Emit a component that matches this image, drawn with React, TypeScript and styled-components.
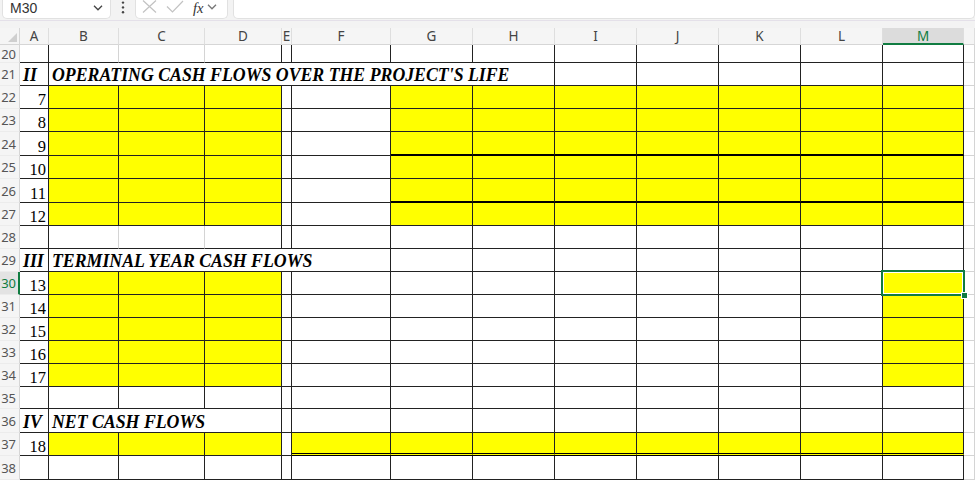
import React from 'react'
import styled, { createGlobalStyle } from 'styled-components'

type Border = 'none' | 'grid' | 'thin' | 'thick' | 'double'
type Kind = 'num' | 'label'

interface CellSpec {
  span?: number
  fill?: boolean
  text?: string
  kind?: Kind
  r?: Border
  b?: Border
  selected?: boolean
}

interface RowSpec {
  n: number
  h: number
  cells: CellSpec[]
}

const GREEN = '#107c41'
const LETTERS = ['A', 'B', 'C', 'D', 'E', 'F', 'G', 'H', 'I', 'J', 'K', 'L', 'M']
const WIDTHS = [29, 70, 86, 77, 10, 99, 82, 82, 82, 82, 82, 82, 81]
const ACTIVE_COL = 'M'
const ACTIVE_ROW = 30

const line = (b: Border = 'thin') => {
  switch (b) {
    case 'none':
      return 'none'
    case 'grid':
      return '1px solid #d4d4d4'
    case 'thick':
      return '2px solid #000'
    case 'double':
      return '3px double #000'
    default:
      return '1px solid #222'
  }
}

const blank = (count: number, spec: CellSpec = {}): CellSpec[] =>
  Array.from({ length: count }, () => ({ ...spec }))

const operatingRow = (n: number, h: number, num: string, thick = false): RowSpec => ({
  n,
  h,
  cells: [
    { text: num, kind: 'num' },
    ...blank(3, { fill: true }),
    {},
    {},
    ...blank(7, { fill: true, b: thick ? 'thick' : 'thin' }),
  ],
})

const terminalRow = (n: number, num: string, selected = false): RowSpec => ({
  n,
  h: 23,
  cells: [
    { text: num, kind: 'num' },
    ...blank(3, { fill: true }),
    {},
    ...blank(7),
    { fill: true, selected },
  ],
})

const ROWS: RowSpec[] = [
  { n: 20, h: 18, cells: [{}, { r: 'grid' }, { r: 'grid' }, ...blank(10)] },
  {
    n: 21,
    h: 23,
    cells: [
      { text: 'II', kind: 'label' },
      { span: 7, text: "OPERATING CASH FLOWS OVER THE PROJECT'S LIFE", kind: 'label' },
      ...blank(5),
    ],
  },
  operatingRow(22, 23, '7'),
  operatingRow(23, 23, '8'),
  operatingRow(24, 24, '9', true),
  operatingRow(25, 23, '10'),
  operatingRow(26, 24, '11', true),
  operatingRow(27, 23, '12'),
  { n: 28, h: 23, cells: [{}, { r: 'grid' }, { r: 'grid' }, ...blank(10)] },
  {
    n: 29,
    h: 23,
    cells: [
      { text: 'III', kind: 'label' },
      { span: 5, text: 'TERMINAL YEAR CASH FLOWS', kind: 'label' },
      ...blank(7),
    ],
  },
  terminalRow(30, '13', true),
  terminalRow(31, '14'),
  terminalRow(32, '15'),
  terminalRow(33, '16'),
  terminalRow(34, '17'),
  { n: 35, h: 22, cells: blank(13) },
  {
    n: 36,
    h: 24,
    cells: [
      { text: 'IV', kind: 'label' },
      { span: 3, text: 'NET CASH FLOWS', kind: 'label' },
      {},
      ...blank(8),
    ],
  },
  {
    n: 37,
    h: 23,
    cells: [
      { text: '18', kind: 'num' },
      ...blank(3, { fill: true }),
      {},
      ...blank(8, { fill: true, b: 'double' }),
    ],
  },
  { n: 38, h: 24, cells: blank(13) },
]

const GlobalStyle = createGlobalStyle`
  html, body {
    margin: 0;
    padding: 0;
    background: #fff;
    overflow: hidden;
  }
  #root {
    width: 975px;
    height: 480px;
    overflow: hidden;
  }
`

const Window = styled.div`
  width: 975px;
  height: 480px;
  display: flex;
  flex-direction: column;
  background: #f3f3f3;
  overflow: hidden;
`

const FormulaBar = styled.div`
  flex: none;
  display: flex;
  align-items: flex-start;
  height: 20px;
  border-bottom: 1px solid #e4e0e9;
  margin-bottom: 7px;
`

const Field = styled.div<{ $w?: number; $gap?: number }>`
  box-sizing: border-box;
  height: 19px;
  background: #fff;
  border: 1px solid #e1e1e1;
  border-top: none;
  border-radius: 0 0 5px 5px;
  display: flex;
  align-items: flex-start;
  width: ${p => (p.$w ? `${p.$w}px` : 'auto')};
  flex: ${p => (p.$w ? 'none' : '1')};
  margin-left: ${p => p.$gap ?? 0}px;
`

const NameText = styled.span`
  padding-left: 7px;
  font-family: 'Liberation Sans', Arial, sans-serif;
  font-size: 14px;
  line-height: 16px;
  color: #333;
`

const Menu = styled.div`
  width: 24px;
  height: 14px;
  display: flex;
  justify-content: center;
  padding-top: 1px;
`

const Fx = styled.span`
  margin-left: 9px;
  font-family: 'Liberation Serif', 'Times New Roman', serif;
  font-style: italic;
  font-size: 14.5px;
  line-height: 16px;
  color: #333;
`

const Sheet = styled.div<{ $rows: string }>`
  display: grid;
  grid-template-columns: 20px ${WIDTHS.map(w => `${w}px`).join(' ')} 1fr;
  grid-template-rows: 17px ${p => p.$rows};
  background: #fff;
  flex: 1;
`

const Corner = styled.div`
  box-sizing: border-box;
  background: #f5f5f5;
  border-right: 1px solid #d6d6d6;
  border-bottom: 1px solid #d6d6d6;
  display: flex;
  align-items: flex-end;
  justify-content: flex-end;
  padding: 0 2px 2px 0;
`

const ColHead = styled.div<{ $active?: boolean }>`
  box-sizing: border-box;
  display: flex;
  align-items: center;
  justify-content: center;
  font-family: 'Noto Sans', 'Open Sans', sans-serif;
  font-size: 13.5px;
  color: ${p => (p.$active ? GREEN : '#444')};
  background: ${p => (p.$active ? '#dcdcdc' : '#f5f5f5')};
  border-right: 1px solid #dedede;
  border-bottom: ${p => (p.$active ? `2px solid ${GREEN}` : '1px solid #d6d6d6')};
  overflow: hidden;
`

const RowHead = styled.div<{ $active?: boolean }>`
  box-sizing: border-box;
  display: flex;
  align-items: center;
  justify-content: flex-end;
  padding-right: ${p => (p.$active ? 2 : 3)}px;
  font-family: 'Noto Sans', 'Open Sans', sans-serif;
  font-size: 13px;
  color: ${p => (p.$active ? GREEN : '#555')};
  background: ${p => (p.$active ? '#e3e3e3' : '#f5f5f5')};
  border-right: ${p => (p.$active ? `2px solid ${GREEN}` : '1px solid #d6d6d6')};
  border-bottom: 1px solid #ececec;
  overflow: hidden;
  white-space: nowrap;
`

const Cell = styled.div<{ $fill?: boolean; $r?: Border; $b?: Border; $kind?: Kind; $span: number; $selected?: boolean }>`
  box-sizing: border-box;
  grid-column: span ${p => p.$span};
  position: ${p => (p.$selected ? 'relative' : 'static')};
  display: flex;
  align-items: flex-end;
  justify-content: ${p => (p.$kind === 'num' ? 'flex-end' : 'flex-start')};
  padding: ${p => (p.$kind === 'num' ? '0 2px 0 0' : '0 0 0 3px')};
  background: ${p => (p.$fill ? '#ffff00' : '#fff')};
  border-right: ${p => line(p.$r)};
  border-bottom: ${p => line(p.$b)};
  font-family: 'Liberation Serif', 'Times New Roman', serif;
  font-size: ${p => (p.$kind === 'num' ? '16.5px' : '17.8px')};
  font-weight: ${p => (p.$kind === 'label' ? 700 : 400)};
  font-style: ${p => (p.$kind === 'label' ? 'italic' : 'normal')};
  line-height: 1;
  color: #000;
  white-space: nowrap;
`

const Selection = styled.span`
  position: absolute;
  left: -2px;
  top: -2px;
  right: -2px;
  bottom: -2px;
  border: 2px solid ${GREEN};
  box-shadow: inset 0 0 0 1px #fff;
  z-index: 2;
  pointer-events: none;

  &::after {
    content: '';
    position: absolute;
    right: -5px;
    bottom: -5px;
    width: 5px;
    height: 5px;
    background: ${GREEN};
    border: 1px solid #fff;
  }
`

const Chevron: React.FC<{ color?: string; margin?: number; top?: number }> = ({ color = '#444', margin = 0, top = 5 }) => (
  <svg width="10" height="6" viewBox="0 0 10 6" style={{ marginLeft: margin, marginTop: top }}>
    <path d="M1 0.8 L5 4.8 L9 0.8" fill="none" stroke={color} strokeWidth="1.3" />
  </svg>
)

const App: React.FC = () => {
  const rowTemplate = ROWS.map(r => `${r.h}px`).join(' ')

  return (
    <>
      <GlobalStyle />
      <Window>
        <FormulaBar>
          <Field $w={109} $gap={2}>
            <NameText>M30</NameText>
            <span style={{ flex: 1 }} />
            <Chevron />
            <span style={{ width: 7 }} />
          </Field>
          <Menu>
            <svg width="4" height="13" viewBox="0 0 4 13">
              <circle cx="2" cy="1.6" r="1.2" fill="#444" />
              <circle cx="2" cy="6.4" r="1.2" fill="#444" />
              <circle cx="2" cy="11.2" r="1.2" fill="#444" />
            </svg>
          </Menu>
          <Field $w={93}>
            <svg width="15" height="13" viewBox="0 0 15 13" style={{ marginLeft: 6 }}>
              <path d="M1 0.5 L14 12.5 M14 0.5 L1 12.5" fill="none" stroke="#c2c2c2" strokeWidth="1.2" />
            </svg>
            <svg width="18" height="13" viewBox="0 0 18 13" style={{ marginLeft: 9 }}>
              <path d="M1 6.5 L6.5 12 L17 1" fill="none" stroke="#c2c2c2" strokeWidth="1.2" />
            </svg>
            <Fx>fx</Fx>
            <Chevron color="#777" margin={4} top={4} />
          </Field>
          <Field $gap={5} />
        </FormulaBar>

        <Sheet $rows={rowTemplate}>
          <Corner>
            <svg width="9" height="9" viewBox="0 0 9 9">
              <polygon points="9,0 9,9 0,9" fill="#cfcfcf" />
            </svg>
          </Corner>
          {LETTERS.map(l => (
            <ColHead key={l} $active={l === ACTIVE_COL}>
              {l}
            </ColHead>
          ))}
          <ColHead />

          {ROWS.map(row => (
            <React.Fragment key={row.n}>
              <RowHead $active={row.n === ACTIVE_ROW}>{row.n}</RowHead>
              {row.cells.map((c, i) => (
                <Cell
                  key={i}
                  $span={c.span ?? 1}
                  $fill={c.fill}
                  $r={c.r}
                  $b={c.b}
                  $kind={c.kind}
                  $selected={c.selected}
                >
                  {c.text}
                  {c.selected && <Selection />}
                </Cell>
              ))}
              <Cell $span={1} $r="grid" $b="grid" />
            </React.Fragment>
          ))}
        </Sheet>
      </Window>
    </>
  )
}

export default App
